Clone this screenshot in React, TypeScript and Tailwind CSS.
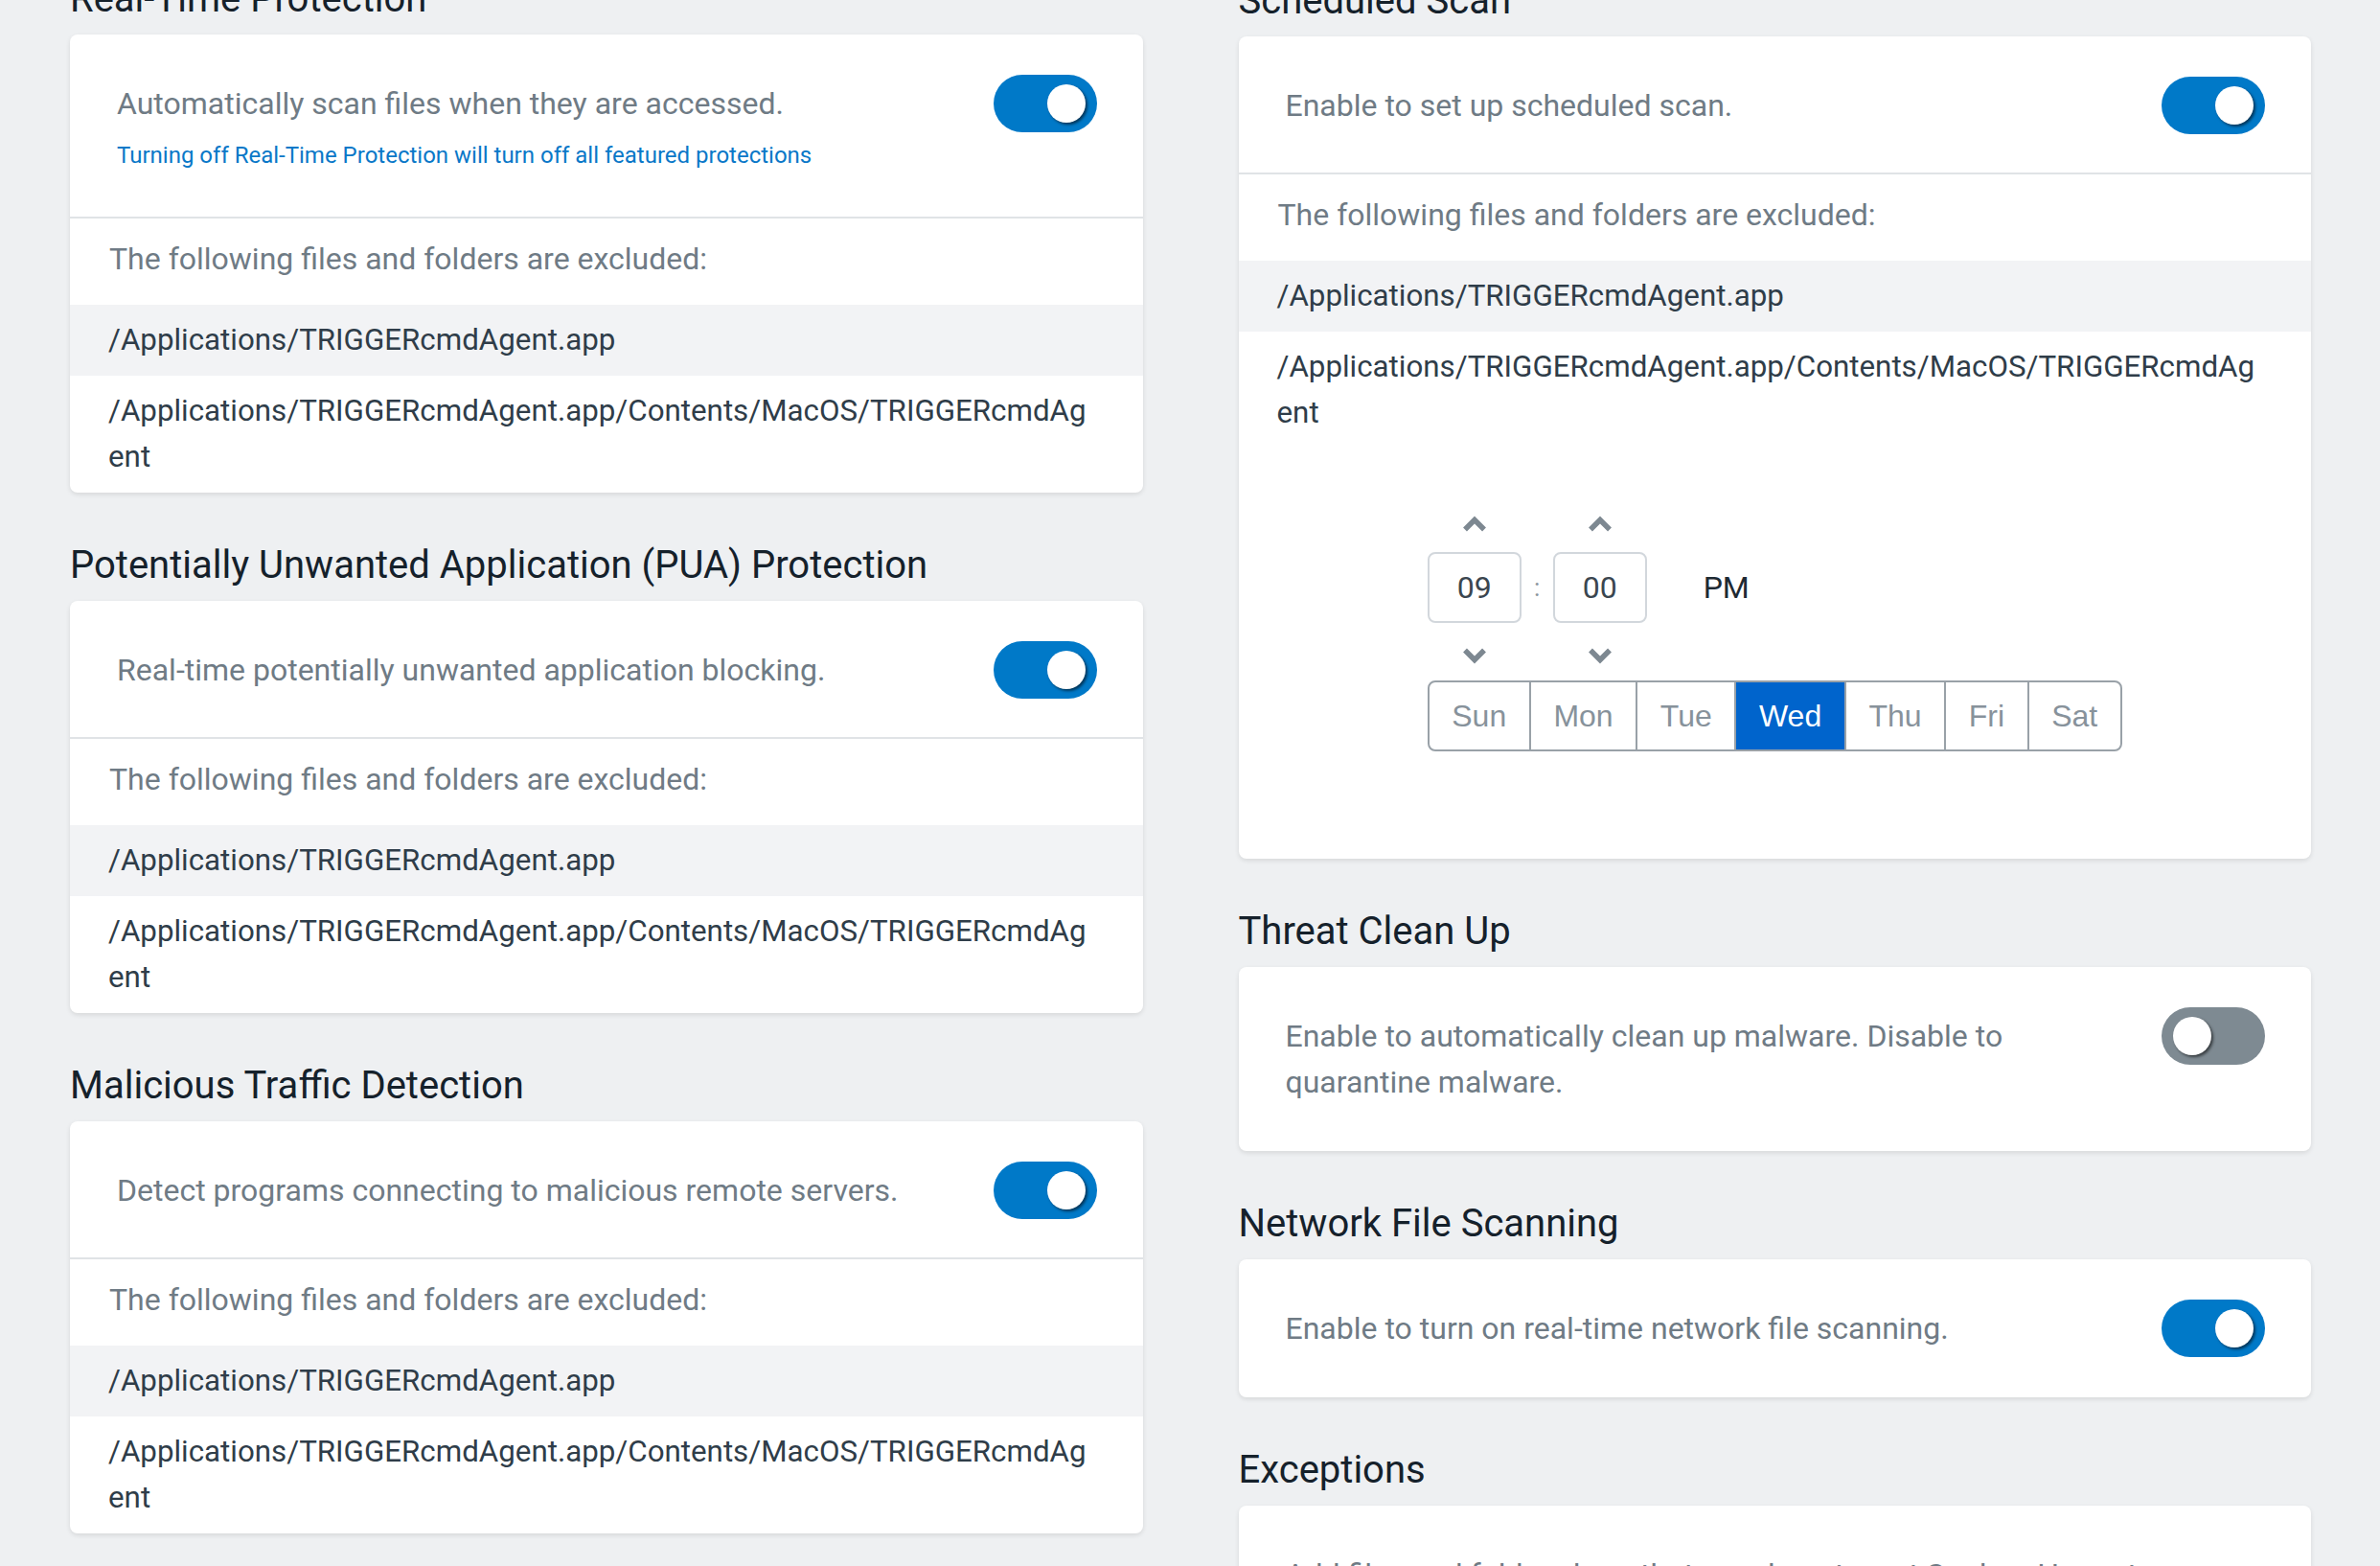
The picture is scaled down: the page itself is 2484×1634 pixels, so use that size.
import React from "react";

const Toggle = ({ on }: { on: boolean }) => (
  <div
    className={`flex items-center px-[12px] w-[108px] h-[60px] rounded-full shrink-0 my-[-6px] ${
      on ? "bg-[#0079c8] justify-end" : "bg-[#7e8a92] justify-start"
    }`}
  >
    <div className="w-[40px] h-[40px] rounded-full bg-white shadow-[2px_2px_3px_rgba(0,0,0,0.55)]" />
  </div>
);

const Title = ({ children, first }: { children: React.ReactNode; first?: boolean }) => (
  <h2
    className={`text-[40px] leading-[48px] text-[#15212b] mb-[13px] ${first ? "" : "mt-[52px]"}`}
  >
    {children}
  </h2>
);

const Card = ({ children }: { children: React.ReactNode }) => (
  <div className="bg-white rounded-[8px] shadow-[0_2px_5px_rgba(0,0,0,0.10)] overflow-hidden">
    {children}
  </div>
);

const ToggleRow = ({
  text,
  sub,
  on,
  textWidth,
}: {
  text: string;
  sub?: string;
  on?: boolean;
  textWidth?: string;
}) => (
  <div
    className={`flex items-start justify-between pl-[49px] pr-[48px] pt-[48px] ${
      sub ? "pb-[46px]" : "pb-[48px]"
    }`}
  >
    <div className={textWidth ?? ""}>
      <div className="text-[32px] leading-[48px] text-[#6f7b85]">{text}</div>
      {sub && (
        <div className="text-[24px] leading-[36px] mt-[12px] text-[#0a78c8]">{sub}</div>
      )}
    </div>
    {on !== undefined && <Toggle on={on} />}
  </div>
);

const Exclusions = ({ tight }: { tight?: boolean }) => (
  <div className={`border-t-2 border-[#e0e3e6] ${tight ? "" : "mt-[-2px]"}`}>
    <div className="px-[41px] pt-[18px] pb-[24px] text-[32px] leading-[48px] text-[#6f7b85]">
      The following files and folders are excluded:
    </div>
    <div className="bg-[#f2f3f5] px-[40px] py-[13px] text-[31.3px] leading-[48px] text-[#2f3d49]">
      /Applications/TRIGGERcmdAgent.app
    </div>
    <div className="px-[40px] py-[13px] text-[31.3px] leading-[48px] text-[#2f3d49]">
      /Applications/TRIGGERcmdAgent.app/Contents/MacOS/TRIGGERcmdAg
      <br />
      ent
    </div>
  </div>
);

const Chevron = ({ up }: { up?: boolean }) => (
  <div className="w-[98px] h-[36px] flex items-center justify-center">
    <svg width="26" height="17" viewBox="0 0 26 17">
      <polyline
        points={up ? "3,14.5 13,4.5 23,14.5" : "3,2.5 13,12.5 23,2.5"}
        fill="none"
        stroke="#7d8891"
        strokeWidth="5.5"
        strokeLinejoin="miter"
      />
    </svg>
  </div>
);

const TimeBox = ({ v }: { v: string }) => (
  <div className="w-[98px] h-[74px] border-2 border-[#d2d7dc] rounded-[8px] flex items-center justify-center text-[32px] text-[#3b4650]">
    {v}
  </div>
);

const days = ["Sun", "Mon", "Tue", "Wed", "Thu", "Fri", "Sat"];

const Picker = () => (
  <div className="flex justify-center pt-[60px] pb-[112px]">
    <div className="flex flex-col items-start">
      <div className="flex">
        <Chevron up />
        <div className="w-[33px]" />
        <Chevron up />
      </div>
      <div className="flex items-center mt-[12px]">
        <TimeBox v="09" />
        <div className="w-[33px] text-center text-[26px] text-[#8b959d]">:</div>
        <TimeBox v="00" />
        <div className="ml-[59px] text-[32px] text-[#1e2a33]">PM</div>
      </div>
      <div className="flex mt-[16px]">
        <Chevron />
        <div className="w-[33px]" />
        <Chevron />
      </div>
      <div className="flex mt-[8px] h-[74px] border-2 border-[#99a1a8] rounded-[8px] overflow-hidden [font-family:'Liberation_Sans',Arial,sans-serif]">
        {days.map((d, i) => (
          <div
            key={d}
            className={`flex items-center px-[23.6px] text-[32px] ${i > 0 ? "border-l-2 border-[#99a1a8]" : ""} ${
              d === "Wed" ? "bg-[#0064cc] text-white" : "text-[#87929b]"
            }`}
          >
            {d}
          </div>
        ))}
      </div>
    </div>
  </div>
);

export default function App() {
  return (
    <div className="w-[2484px] h-[1634px] overflow-hidden bg-[#eef0f2] [font-family:Roboto,'Noto_Sans',sans-serif]">
      <div className="flex pl-[73px] pr-[72px] gap-[100px]">
        <div className="flex-1 min-w-0 mt-[-25px]">
          <Title first>Real-Time Protection</Title>
          <Card>
            <ToggleRow
              text="Automatically scan files when they are accessed."
              sub="Turning off Real-Time Protection will turn off all featured protections"
              on
            />
            <Exclusions tight />
          </Card>
          <Title>Potentially Unwanted Application (PUA) Protection</Title>
          <Card>
            <ToggleRow text="Real-time potentially unwanted application blocking." on />
            <Exclusions />
          </Card>
          <Title>Malicious Traffic Detection</Title>
          <Card>
            <ToggleRow text="Detect programs connecting to malicious remote servers." on />
            <Exclusions />
          </Card>
        </div>
        <div className="flex-1 min-w-0 mt-[-23px]">
          <Title first>Scheduled Scan</Title>
          <Card>
            <ToggleRow text="Enable to set up scheduled scan." on />
            <Exclusions />
            <Picker />
          </Card>
          <Title>Threat Clean Up</Title>
          <Card>
            <ToggleRow
              text="Enable to automatically clean up malware. Disable to quarantine malware."
              on={false}
              textWidth="w-[840px]"
            />
          </Card>
          <Title>Network File Scanning</Title>
          <Card>
            <ToggleRow text="Enable to turn on real-time network file scanning." on />
          </Card>
          <Title>Exceptions</Title>
          <Card>
            <ToggleRow text="Add files and folders here that you do not want Sophos Home to scan." />
          </Card>
        </div>
      </div>
    </div>
  );
}
